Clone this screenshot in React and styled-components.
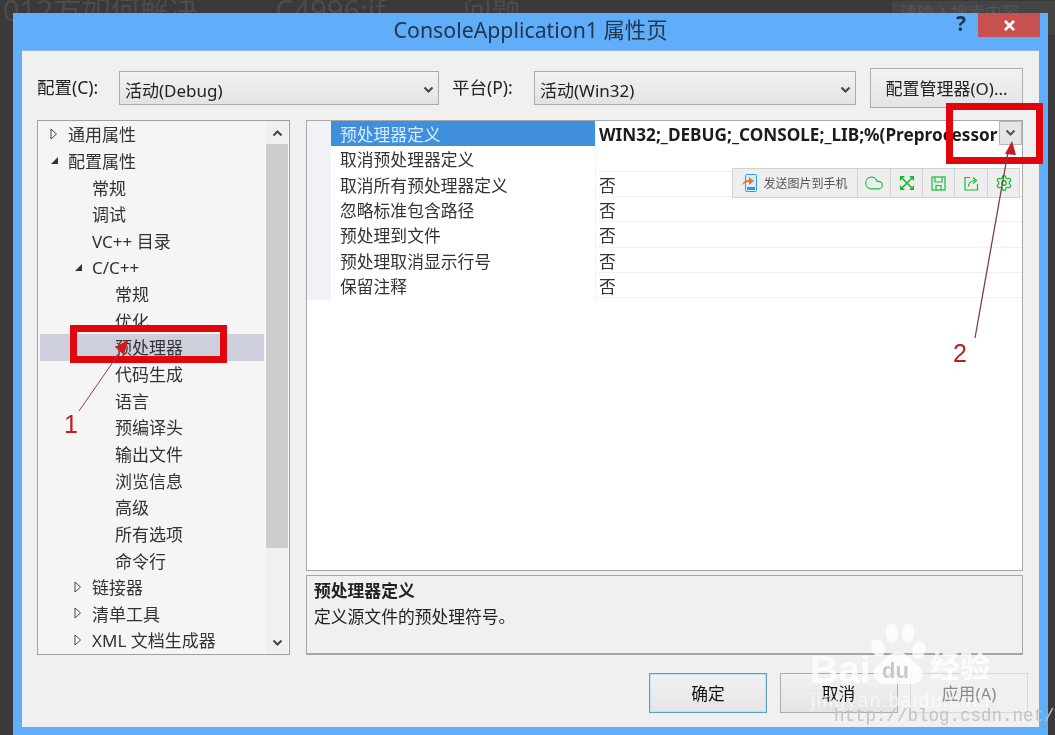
import React from 'react';
import styled, { createGlobalStyle } from 'styled-components';
import { Cloud, Settings } from 'lucide-react';

const GlobalStyle = createGlobalStyle`
  html, body {
    margin: 0;
    padding: 0;
    background: #3a3a3a;
  }
  * {
    box-sizing: border-box;
  }
`;

const FONT = '"Noto Sans", "Noto Sans CJK SC", sans-serif';

const Page = styled.div`
  position: relative;
  width: 1055px;
  height: 735px;
  padding: 13px 7px 0 13px;
  overflow: hidden;
  background: #3a3a3a;
  font-family: ${FONT};
  color: #222;
  filter: blur(0.3px);
`;

const BackTitle = styled.div`
  position: absolute;
  left: 3px;
  top: -7px;
  font-size: 29px;
  line-height: 34px;
  color: #4c4c4c;
  white-space: nowrap;
  word-spacing: 70px;
`;

const BackSearch = styled.div`
  position: absolute;
  right: 0;
  top: 1px;
  width: 163px;
  height: 34px;
  padding: 0 0 0 8px;
  background: #444;
  color: #555;
  font-size: 17px;
  line-height: 24px;
`;

const Dialog = styled.div`
  position: relative;
  display: flex;
  flex-direction: column;
  width: 1035px;
  height: 722px;
  background: #60aefa;
`;

const TitleBar = styled.div`
  position: relative;
  display: flex;
  justify-content: center;
  align-items: center;
  height: 37px;
  padding-bottom: 6px;
  font-size: 21.3px;
  color: #20374f;
`;

const TitleControls = styled.div`
  position: absolute;
  right: 8px;
  top: 0;
  display: flex;
  align-items: flex-start;
`;

const HelpMark = styled.span`
  margin-right: 12px;
  font-size: 21px;
  font-weight: 700;
  line-height: 20px;
  color: #1f3550;
`;

const CloseButton = styled.div`
  display: flex;
  justify-content: center;
  align-items: center;
  width: 62px;
  height: 24px;
  background: #c75050;
  color: #fff;
`;

const Body = styled.div`
  display: flex;
  flex-direction: column;
  gap: 12px;
  height: 677px;
  margin: 0 9px;
  padding: 17px 16px 14px 15px;
  background: #f0f0f0;
  border-top: 1px solid #8fb9dd;
`;

const TopRow = styled.div`
  display: flex;
  align-items: center;
  height: 40px;
`;

const FieldLabel = styled.span`
  width: ${p => p.$width}px;
  padding-bottom: 3px;
  font-size: 17.5px;
  white-space: nowrap;
`;

const Select = styled.div`
  display: flex;
  justify-content: space-between;
  align-items: center;
  width: ${p => p.$width}px;
  height: 34px;
  margin-right: ${p => p.$gap}px;
  padding: 3px 4px 0 5px;
  background: linear-gradient(#f2f2f2, #e3e3e3);
  border: 1px solid #acacac;
  font-size: 17px;
`;

const ManagerButton = styled.div`
  display: flex;
  justify-content: center;
  align-items: center;
  width: 153px;
  height: 40px;
  padding-bottom: 2px;
  background: linear-gradient(#f2f2f2, #e4e4e4);
  border: 1px solid #adadad;
  font-size: 17px;
`;

const Panels = styled.div`
  display: flex;
  gap: 16px;
  height: 535px;
`;

const TreePanel = styled.div`
  display: flex;
  width: 253px;
  height: 535px;
  background: #f5f5f5;
  border: 1px solid #a0a0a0;
`;

const TreeList = styled.div`
  flex: 1;
  min-width: 0;
  padding: 0 2px;
`;

const TreeRow = styled.div`
  display: flex;
  align-items: center;
  height: 26.65px;
  padding-left: ${p => p.$indent}px;
  padding-bottom: 1px;
  background: ${p => (p.$active ? '#cdd0dc' : 'transparent')};
  font-size: 17px;
  color: #333;
  white-space: nowrap;
`;

const Twisty = styled.span`
  display: flex;
  justify-content: center;
  width: 25px;
  padding-right: 3px;
`;

const ScrollBar = styled.div`
  display: flex;
  flex-direction: column;
  align-items: center;
  flex-shrink: 0;
  width: 22px;
  margin-right: 1px;
  background: #f0f0f0;
`;

const ScrollButton = styled.div`
  display: flex;
  flex-shrink: 0;
  justify-content: center;
  align-items: center;
  height: ${p => p.$height}px;
`;

const ScrollThumb = styled.div`
  flex-shrink: 0;
  width: 100%;
  height: 404px;
  margin-bottom: auto;
  background: #cdcdcd;
`;

const RightColumn = styled.div`
  display: flex;
  flex: 1;
  flex-direction: column;
  gap: 4px;
`;

const Grid = styled.div`
  height: 451px;
  background: #fff;
  border: 1px solid #a9a9a9;
`;

const GridRow = styled.div`
  display: grid;
  grid-template-columns: 24px 264px 1fr;
  height: 25.35px;
  border-bottom: 1px solid ${p => (p.$selected ? 'transparent' : '#f1f0f3')};
`;

const Gutter = styled.div`
  background: #f1f2f8;
`;

const NameCell = styled.div`
  padding-left: 9px;
  background: ${p => (p.$selected ? '#3f8fdd' : '#fff')};
  color: ${p => (p.$selected ? '#d7ecff' : '#333')};
  font-size: 16.8px;
  line-height: 27px;
  white-space: nowrap;
`;

const ValueCell = styled.div`
  position: relative;
  padding-left: 3px;
  border-left: 1px solid #f1f0f3;
  font-size: ${p => (p.$bold ? 17.2 : 16.8)}px;
  font-weight: ${p => (p.$bold ? 700 : 400)};
  line-height: 27px;
  color: ${p => (p.$bold ? '#1c1c1c' : '#333')};
  white-space: nowrap;
  overflow: hidden;
`;

const DropButton = styled.div`
  position: absolute;
  right: 0;
  top: 0;
  display: flex;
  justify-content: center;
  align-items: center;
  width: 23px;
  height: 24px;
  background: #e6e6e6;
  border: 1px solid #b5b5b5;
`;

const DescPanel = styled.div`
  height: 80px;
  padding: 2px 7px;
  background: #f0f0f0;
  border: 1px solid #a6a6a6;
  border-bottom-width: 2px;
  font-size: 16.8px;
  line-height: 26px;
`;

const DescTitle = styled.div`
  font-weight: 700;
`;

const Footer = styled.div`
  display: flex;
  justify-content: flex-end;
  gap: 12.5px;
  margin: 6px -5px 0 0;
`;

const DialogButton = styled.div`
  display: flex;
  justify-content: center;
  align-items: center;
  width: 118px;
  height: 40px;
  background: ${p => (p.$disabled ? '#f0f0f0' : 'linear-gradient(#f2f2f2, #e4e4e4)')};
  border: 1px solid ${p => (p.$primary ? '#5d9ccb' : p.$disabled ? '#d9d9d9' : '#adadad')};
  box-shadow: ${p => (p.$primary ? 'inset 0 0 0 1px #c4e0f5' : 'none')};
  color: ${p => (p.$disabled ? '#8a8a8a' : '#111')};
  font-size: 16.8px;
`;

const Toolbar = styled.div`
  position: absolute;
  left: 732px;
  top: 168px;
  display: flex;
  height: 30px;
  background: #eee;
  border: 1px solid #d2d2d2;
`;

const ToolCell = styled.div`
  display: flex;
  justify-content: center;
  align-items: center;
  gap: 5px;
  width: ${p => p.$width}px;
  border-right: ${p => (p.$last ? 'none' : '1px solid #d2d2d2')};
  color: #555;
  font-size: 12px;
`;

const RedBox = styled.div`
  position: absolute;
  left: ${p => p.$x}px;
  top: ${p => p.$y}px;
  width: ${p => p.$w}px;
  height: ${p => p.$h}px;
  border: ${p => p.$t}px solid #e0060c;
`;

const Arrows = styled.svg`
  position: absolute;
  left: 0;
  top: 0;
`;

const Step = styled.span`
  position: absolute;
  left: ${p => p.$x}px;
  top: ${p => p.$y}px;
  font-family: "Liberation Sans", sans-serif;
  font-size: 25px;
  line-height: 28px;
  color: #b9201f;
`;

const Watermark = styled.div`
  position: absolute;
  left: 808px;
  top: 622px;
  width: 200px;
  height: 92px;
  color: rgba(255, 255, 255, 0.78);
`;

const MarkWord = styled.span`
  position: absolute;
  left: ${p => p.$x}px;
  top: ${p => p.$y}px;
  color: ${p => p.$color || 'inherit'};
  font-family: "Liberation Sans", "Noto Sans CJK SC", sans-serif;
  font-size: ${p => p.$size}px;
  font-weight: 700;
  line-height: 1;
  white-space: nowrap;
`;

const MarkSite = styled.span`
  position: absolute;
  left: 3px;
  top: 67px;
  color: rgba(255, 255, 255, 0.6);
  font-family: "Liberation Sans", sans-serif;
  font-size: 19.5px;
  letter-spacing: 1.3px;
  line-height: 22px;
  white-space: nowrap;
`;

const CsdnMark = styled.span`
  position: absolute;
  left: 834px;
  top: 706px;
  font-family: "Liberation Mono", monospace;
  font-size: 17.5px;
  line-height: 20px;
  color: #c3c3c3;
  white-space: nowrap;
`;

const Chevron = ({ up, color = '#444' }) => (
  <svg width="11" height="8" viewBox="0 0 11 8">
    <path
      d={up ? 'M1.5 6.5 L5.5 2.5 L9.5 6.5' : 'M1.5 1.5 L5.5 5.5 L9.5 1.5'}
      fill="none"
      stroke={color}
      strokeWidth="2"
    />
  </svg>
);

const Collapsed = () => (
  <svg width="8" height="12" viewBox="0 0 8 12">
    <path d="M1 1 L6.5 6 L1 11 Z" fill="#fff" stroke="#444" strokeWidth="1" />
  </svg>
);

const Expanded = () => (
  <svg width="9" height="9" viewBox="0 0 9 9">
    <path d="M8 1 L8 8 L1 8 Z" fill="#333" />
  </svg>
);

const PhoneIcon = () => (
  <svg width="16" height="18" viewBox="0 0 16 18">
    <rect x="3.5" y="0.5" width="11" height="17" rx="1" fill="#d5eefc" stroke="#2d9be8" />
    <rect x="5" y="13" width="8" height="3" fill="#2d9be8" />
    <path d="M0 11 C1 7 4 6 7 6 L7 3 L12 7 L7 11 L7 8 C4 8 2 9 0 11 Z" fill="#f2702a" />
  </svg>
);

const ExpandIcon = () => (
  <svg width="14" height="14" viewBox="0 0 14 14">
    <path d="M2 2 L12 12 M12 2 L2 12" stroke="#12bb30" strokeWidth="1.6" />
    <path d="M0 0 H5 L0 5 Z M14 0 V5 L9 0 Z M0 14 V9 L5 14 Z M14 14 H9 L14 9 Z" fill="#12bb30" />
  </svg>
);

const SaveIcon = () => (
  <svg width="15" height="15" viewBox="0 0 15 15" fill="none" stroke="#11c02f" strokeWidth="1.2">
    <rect x="1" y="1" width="13" height="13" />
    <path d="M4 1 V6 H11 V1 M5 14 V9.5 H10 V14" />
  </svg>
);

const ShareIcon = () => (
  <svg width="15" height="15" viewBox="0 0 15 15" fill="none" stroke="#11c02f" strokeWidth="1.2">
    <path d="M6 1.5 H1 V14 H13.5 V8" />
    <path d="M4.5 10.5 C5 6 8 4.5 11 4.5 M9 1.5 L12.5 4.5 L9 7.5" />
  </svg>
);

const treeItems = [
  { label: '通用属性', indent: 3, icon: 'closed' },
  { label: '配置属性', indent: 3, icon: 'open' },
  { label: '常规', indent: 52 },
  { label: '调试', indent: 52 },
  { label: 'VC++ 目录', indent: 52 },
  { label: 'C/C++', indent: 27, icon: 'open' },
  { label: '常规', indent: 75 },
  { label: '优化', indent: 75 },
  { label: '预处理器', indent: 75, active: true },
  { label: '代码生成', indent: 75 },
  { label: '语言', indent: 75 },
  { label: '预编译头', indent: 75 },
  { label: '输出文件', indent: 75 },
  { label: '浏览信息', indent: 75 },
  { label: '高级', indent: 75 },
  { label: '所有选项', indent: 75 },
  { label: '命令行', indent: 75 },
  { label: '链接器', indent: 27, icon: 'closed' },
  { label: '清单工具', indent: 27, icon: 'closed' },
  { label: 'XML 文档生成器', indent: 27, icon: 'closed' },
];

const gridRows = [
  { name: '预处理器定义', value: 'WIN32;_DEBUG;_CONSOLE;_LIB;%(Preprocessor', selected: true },
  { name: '取消预处理器定义', value: '' },
  { name: '取消所有预处理器定义', value: '否' },
  { name: '忽略标准包含路径', value: '否' },
  { name: '预处理到文件', value: '否' },
  { name: '预处理取消显示行号', value: '否' },
  { name: '保留注释', value: '否' },
];

const App = () => (
  <Page>
    <GlobalStyle />
    <BackTitle>012方如何解决 C4996:if 问题</BackTitle>
    <BackSearch>请输入搜索内容</BackSearch>

    <Dialog>
      <TitleBar>
        ConsoleApplication1 属性页
        <TitleControls>
          <HelpMark>?</HelpMark>
          <CloseButton>
            <svg width="11" height="11" viewBox="0 0 11 11">
              <path d="M1 1 L10 10 M10 1 L1 10" stroke="#fff" strokeWidth="2.6" />
            </svg>
          </CloseButton>
        </TitleControls>
      </TitleBar>

      <Body>
        <TopRow>
          <FieldLabel $width={82}>配置(C):</FieldLabel>
          <Select $width={320} $gap={13}>
            活动(Debug)
            <Chevron />
          </Select>
          <FieldLabel $width={82}>平台(P):</FieldLabel>
          <Select $width={322} $gap={14}>
            活动(Win32)
            <Chevron />
          </Select>
          <ManagerButton>配置管理器(O)...</ManagerButton>
        </TopRow>

        <Panels>
          <TreePanel>
            <TreeList>
              {treeItems.map((item, i) => (
                <TreeRow key={i} $indent={item.indent} $active={item.active}>
                  {item.icon && (
                    <Twisty>{item.icon === 'open' ? <Expanded /> : <Collapsed />}</Twisty>
                  )}
                  {item.label}
                </TreeRow>
              ))}
            </TreeList>
            <ScrollBar>
              <ScrollButton $height={23}>
                <Chevron up />
              </ScrollButton>
              <ScrollThumb />
              <ScrollButton $height={23}>
                <Chevron />
              </ScrollButton>
            </ScrollBar>
          </TreePanel>

          <RightColumn>
            <Grid>
              {gridRows.map(row => (
                <GridRow key={row.name} $selected={row.selected}>
                  <Gutter />
                  <NameCell $selected={row.selected}>{row.name}</NameCell>
                  <ValueCell $bold={row.selected}>
                    {row.value}
                    {row.selected && (
                      <DropButton>
                        <Chevron color="#555" />
                      </DropButton>
                    )}
                  </ValueCell>
                </GridRow>
              ))}
            </Grid>
            <DescPanel>
              <DescTitle>预处理器定义</DescTitle>
              定义源文件的预处理符号。
            </DescPanel>
          </RightColumn>
        </Panels>

        <Footer>
          <DialogButton $primary>确定</DialogButton>
          <DialogButton>取消</DialogButton>
          <DialogButton $disabled>应用(A)</DialogButton>
        </Footer>
      </Body>
    </Dialog>

    <Toolbar>
      <ToolCell $width={125}>
        <PhoneIcon />
        发送图片到手机
      </ToolCell>
      <ToolCell $width={33}>
        <Cloud size={20} color="#11c02f" strokeWidth={1.3} />
      </ToolCell>
      <ToolCell $width={32}>
        <ExpandIcon />
      </ToolCell>
      <ToolCell $width={32}>
        <SaveIcon />
      </ToolCell>
      <ToolCell $width={33}>
        <ShareIcon />
      </ToolCell>
      <ToolCell $width={31} $last>
        <Settings size={18} color="#11c02f" strokeWidth={1.7} />
      </ToolCell>
    </Toolbar>

    <RedBox $x={70} $y={325} $w={157} $h={38} $t={7} />
    <RedBox $x={946} $y={103} $w={97} $h={61} $t={7} />

    <Arrows width="1055" height="735" viewBox="0 0 1055 735">
      <path d="M79 411 L122 349" stroke="#a5383a" strokeWidth="1" fill="none" />
      <path d="M128 340 L124 355 L115 347 Z" fill="#d9141a" />
      <path d="M975 338 L1008 152" stroke="#7a4048" strokeWidth="1.3" fill="none" />
      <path d="M1012 141 L1016 155 L1005 154 Z" fill="#c81a20" />
    </Arrows>
    <Step $x={64} $y={410}>1</Step>
    <Step $x={953} $y={339}>2</Step>

    <Watermark>
      <svg width="200" height="66" viewBox="0 0 200 66" fill="currentColor">
        <ellipse cx="70" cy="26" rx="6.5" ry="9" transform="rotate(-20 70 26)" />
        <ellipse cx="84" cy="11" rx="6.5" ry="9.5" />
        <ellipse cx="100" cy="11" rx="6.5" ry="9.5" />
        <ellipse cx="111" cy="28" rx="6.5" ry="9" transform="rotate(20 111 28)" />
        <path d="M90 30 C81 30 78 38 70 43 C62 49 66 62 78 62 L104 62 C116 62 118 49 110 43 C102 38 99 30 90 30 Z" />
      </svg>
      <MarkWord $x={2} $y={28} $size={39}>Bai</MarkWord>
      <MarkWord $x={74} $y={38} $size={22} $color="#c9c9c9">du</MarkWord>
      <MarkWord $x={122} $y={30} $size={30}>经验</MarkWord>
      <MarkSite>jingyan.baidu.com</MarkSite>
    </Watermark>
    <CsdnMark>http://blog.csdn.net/</CsdnMark>
  </Page>
);

export default App;
